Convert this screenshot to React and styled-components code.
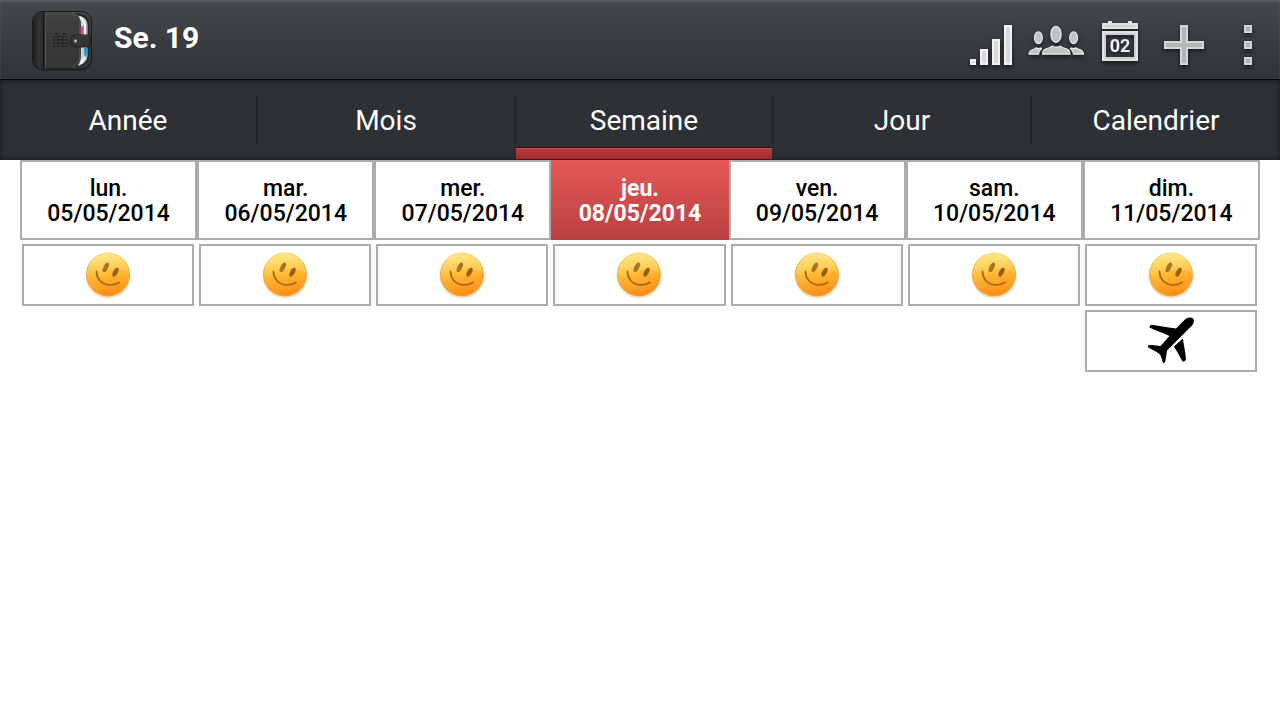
import { useState } from 'react';
import styled, { createGlobalStyle, css } from 'styled-components';

const GlobalStyle = createGlobalStyle`
  *,
  *::before,
  *::after {
    box-sizing: border-box;
  }
  body {
    margin: 0;
    background: #fff;
    font-family: Roboto, 'Liberation Sans', sans-serif;
  }
  button {
    margin: 0;
    padding: 0;
    border: 0;
    background: none;
    font: inherit;
    color: inherit;
    cursor: pointer;
  }
  svg {
    display: block;
  }
`;

const Header = styled.header`
  height: 80px;
  display: flex;
  align-items: center;
  padding-left: 32px;
  background: linear-gradient(#43484c, #303338);
  border-bottom: 1px solid #000;
  box-shadow: inset 0 2px 2px #5a6166;
  color: #fff;
`;

const Title = styled.h1`
  flex: 1;
  margin: 0 0 4px 18px;
  font-size: 30px;
  line-height: 36px;
  font-weight: 700;
`;

const Actions = styled.div`
  display: flex;
`;

const ActionButton = styled.button`
  width: 64px;
  height: 80px;
  svg {
    filter: drop-shadow(0 2px 2px rgba(0, 0, 0, 0.6));
  }
`;

const Tabs = styled.nav`
  height: 80px;
  display: flex;
  gap: 2px;
  background: #2d3035;
  box-shadow: inset 0 0 5px 1px #1b1d21;
`;

const Tab = styled.button`
  position: relative;
  flex: 0 0 20%;
  padding-top: 2px;
  font-size: 28px;
  line-height: 34px;
  color: #fff;

  &:last-child {
    flex: 1 1 0;
    min-width: 0;
  }

  &:not(:last-child)::before {
    content: '';
    position: absolute;
    left: 100%;
    top: 16px;
    bottom: 16px;
    width: 2px;
    background: #23262a;
  }

  ${({ $active }) =>
    $active &&
    css`
      &::after {
        content: '';
        position: absolute;
        left: 0;
        right: 0;
        bottom: 0;
        height: 13px;
        border-top: 1px solid #2c0808;
        border-bottom: 1px solid #5c0d0f;
        background: linear-gradient(#b93b3b, #a12e2e);
        box-shadow: inset 0 1px 0 #c95151;
      }
    `}
`;

const Main = styled.main`
  padding: 0 20px;
`;

const Week = styled.table`
  width: 100%;
  table-layout: fixed;
  border-collapse: separate;
  border-spacing: 0;
`;

const DayHead = styled.th`
  height: 80px;
  padding: 2px 0 0;
  border: 2px solid #acacac;
  font-size: 23px;
  line-height: 25px;
  font-weight: 500;
  color: #000;

  ${({ $today }) =>
    $today &&
    css`
      border-color: transparent;
      background: linear-gradient(#e75757, #b74141) border-box;
      font-weight: 700;
      color: #fff;
    `}
`;

const Slot = styled.td`
  padding: 4px 3px 0 2px;
`;

const EventButton = styled.button`
  width: 100%;
  height: 62px;
  display: flex;
  align-items: center;
  justify-content: center;
  border: 2px solid #acacac;
  background: #fff;
`;

const Logo = () => (
  <svg width="64" height="64" viewBox="0 -1 64 64" aria-hidden="true">
    <defs>
      <linearGradient id="leather" x1="0" y1="0" x2="0" y2="1">
        <stop offset="0" stopColor="#4a4a4a" />
        <stop offset="0.15" stopColor="#3e3e3e" />
        <stop offset="1" stopColor="#343434" />
      </linearGradient>
      <linearGradient id="spine" x1="0" y1="0" x2="1" y2="0">
        <stop offset="0" stopColor="#1c1c1c" />
        <stop offset="0.5" stopColor="#343434" />
        <stop offset="1" stopColor="#262626" />
      </linearGradient>
    </defs>
    <rect x="0" y="3" width="60" height="59" rx="11" fill="#111" opacity="0.4" />
    <rect x="0.5" y="2.5" width="59" height="57.5" rx="10" fill="url(#leather)" stroke="#191919" />
    <path d="M11 3H13V59.500H11A10 10 0 0 1 1 49V13A10 10 0 0 1 11 3Z" fill="url(#spine)" />
    <path d="M13.500 3V59.500" stroke="#565656" />
    <path d="M11.500 3V59.500" stroke="#151515" />
    <path d="M42 4C47 6 48 10 48 15V47C48 52 46 55 42 58C51 58 57 54 57 46V15C57 8 52 4 42 4Z" fill="#222" />
    <path d="M46 6.500C48.500 9 49 13 49 18V45C49 50 48 54 45.500 57C52 55 55.500 52 55.500 46V16C55.500 10 51 7.500 46 6.500Z" fill="#d5d5d5" />
    <path d="M52 10V53M54.500 13V51" stroke="#888" strokeWidth="0.6" />
    <path d="M48 8C51.500 11 53 15 53 19V44C53 49 51 52 48.500 55" fill="none" stroke="#fff" strokeWidth="1.600" />
    <path d="M48.500 18L51.500 17V26H48.500Z" fill="#d94784" />
    <path d="M52 39H55.500V45L52.500 48.500Z" fill="#159bd0" />
    <path d="M40 4C47 6 48 11 48 16V46C48 53 45 56 40 58.500" fill="none" stroke="#666" strokeWidth="0.8" />
    <rect x="21.500" y="27" width="14" height="11" rx="1" fill="#262626" />
    <path d="M23 25H26M31 25H34" stroke="#262626" strokeWidth="2" />
    <g fill="#3f3f3f">
      <rect x="22.500" y="28" width="3" height="2" />
      <rect x="27" y="28" width="3" height="2" />
      <rect x="31.500" y="28" width="3" height="2" />
      <rect x="22.500" y="31.500" width="3" height="2" />
      <rect x="27" y="31.500" width="3" height="2" />
      <rect x="31.500" y="31.500" width="3" height="2" />
      <rect x="22.500" y="35" width="3" height="2" />
      <rect x="27" y="35" width="3" height="2" />
      <rect x="31.500" y="35" width="3" height="2" />
    </g>
    <path d="M44 26H58V38H44A6 6 0 0 1 44 26Z" fill="#333" stroke="#1b1b1b" />
    <path d="M44 27H58" stroke="#484848" />
    <circle cx="43.500" cy="32" r="1.700" fill="#999" />
    <circle cx="43.500" cy="31.500" r="0.800" fill="#ddd" />
  </svg>
);

const SignalIcon = () => (
  <svg width="64" height="80" viewBox="0 0 64 80">
    <g fill="#d9d9d9" stroke="#f2f2f2" strokeWidth="2">
      <rect x="11" y="60" width="4" height="4" />
      <rect x="21" y="50" width="6" height="14" />
      <rect x="33" y="40" width="6" height="24" />
      <rect x="45" y="26" width="6" height="38" />
    </g>
  </svg>
);

const PeopleIcon = () => (
  <svg width="64" height="80" viewBox="0 0 64 80">
    <g fill="#c2c2c2" stroke="#e8e8e8" strokeWidth="1.300" strokeLinejoin="round">
      <ellipse cx="14.400" cy="37.800" rx="3.900" ry="5.900" />
      <ellipse cx="49.600" cy="37.800" rx="3.900" ry="5.900" />
      <path d="M5 54.200C5 51 7 50 10.500 49L12 47.800C14 49 15 48.800 16.500 48L17.500 48.500C15.500 50.500 14.500 51 14.500 54.200Z" />
      <path d="M59.500 54.200C59.500 51 57.500 50 53.500 49L52 47.800C50 49 49 48.800 47.500 48L46.500 48.500C48.500 50.500 49.500 51 49.500 54.200Z" />
      <ellipse cx="32" cy="34.300" rx="5.100" ry="8" />
      <path d="M18.500 54.200C18.500 50 21 49 26 47.500L28.500 46.200C31 47.600 33.500 47.600 36 46.200L38.500 47.500C43.500 49 46 50 46 54.200Z" />
    </g>
  </svg>
);

const DateIcon = () => (
  <svg width="64" height="80" viewBox="0 0 64 80">
    <path d="M14 23H20V21H24V23H40V21H44V23H50V29H14Z" fill="#e2e2e2" />
    <path d="M17 26H47" stroke="#cfcfcf" strokeWidth="2" />
    <path d="M14 31H50V61H14ZM18 35V57H46V35Z" fill="#e2e2e2" fillRule="evenodd" />
    <path d="M17 34H47V58H17Z" fill="none" stroke="#cfcfcf" strokeWidth="2" />
    <text x="32" y="52" textAnchor="middle" fontSize="18" fontWeight="700" fill="#f0f0f0">
      02
    </text>
  </svg>
);

const PlusIcon = () => (
  <svg width="64" height="80" viewBox="0 0 64 80">
    <path
      d="M29 26H35V42H51V48H35V64H29V48H13V42H29Z"
      fill="#b5b5b5"
      stroke="#d6d6d6"
      strokeWidth="2"
    />
  </svg>
);

const MoreIcon = () => (
  <svg width="64" height="80" viewBox="0 0 64 80">
    <g fill="#b0b0b0" stroke="#d2d2d2" strokeWidth="2">
      <rect x="29" y="26" width="6" height="6" />
      <rect x="29" y="42" width="6" height="6" />
      <rect x="29" y="58" width="6" height="6" />
    </g>
  </svg>
);

const SmileyIcon = () => (
  <svg width="48" height="48" viewBox="0 0 48 48">
    <defs>
      <linearGradient id="face" x1="0.4" y1="0" x2="0.6" y2="1">
        <stop offset="0" stopColor="#ffd95f" />
        <stop offset="0.450" stopColor="#ffbc3a" />
        <stop offset="1" stopColor="#ff8a12" />
      </linearGradient>
      <linearGradient id="gloss" x1="0" y1="0" x2="0" y2="1">
        <stop offset="0" stopColor="#fff3a8" stopOpacity="0.6" />
        <stop offset="1" stopColor="#ffe07a" stopOpacity="0.15" />
      </linearGradient>
    </defs>
    <circle cx="24" cy="25" r="22.500" fill="#d9a050" opacity="0.3" />
    <circle cx="24" cy="23.500" r="21.500" fill="url(#face)" stroke="#e8a035" strokeWidth="0.8" />
    <path d="M3 23A21 21 0 0 1 45 22C36 16 23 18 15 22C10 24.500 6 26 3 23Z" fill="url(#gloss)" />
    <ellipse cx="21.800" cy="16.300" rx="2.300" ry="5.200" transform="rotate(28 21.800 16.300)" fill="#a8741f" />
    <ellipse cx="31.500" cy="21.200" rx="2.300" ry="4.900" transform="rotate(28 31.500 21.200)" fill="#94600f" />
    <path
      d="M12.500 20.500C12.500 27 17 33 24 33.800C28 34.200 32 33.200 35 31.500"
      fill="none"
      stroke="#a86a14"
      strokeWidth="1.800"
      strokeLinecap="round"
    />
  </svg>
);

const PlaneIcon = () => (
  <svg width="48" height="48" viewBox="0 0 48 48">
    <path d="M38 2.500C41 0 44.500 0 46 1.500C47.500 3.500 47 6 45 8.500L20 33.500C19.500 37 19 41 18 45.500L16 46.200C15 43 14.500 40 13 37.500C10 34.500 5 32.500 0.800 30.200L1.500 28C5.500 28 10 28.500 13.500 29L22.500 19C16 16 9 13.500 2.500 10.500C2.500 9 3.500 8 5 7.800C13 9 21 10.500 29 11.500Z" />
    <path d="M35.800 21.500C37 29 38.500 36 39 42C38.500 44 37.500 44.500 35.500 44.500C33 39.500 30 34.500 27 29.500Z" />
  </svg>
);

const views = ['Année', 'Mois', 'Semaine', 'Jour', 'Calendrier'];

const actions = [
  { label: 'Statistiques', Icon: SignalIcon },
  { label: 'Contacts', Icon: PeopleIcon },
  { label: "Aujourd'hui", Icon: DateIcon },
  { label: 'Ajouter', Icon: PlusIcon },
  { label: 'Menu', Icon: MoreIcon },
];

const days = [
  { name: 'lun.', date: '05/05/2014', events: ['smiley'] },
  { name: 'mar.', date: '06/05/2014', events: ['smiley'] },
  { name: 'mer.', date: '07/05/2014', events: ['smiley'] },
  { name: 'jeu.', date: '08/05/2014', events: ['smiley'], today: true },
  { name: 'ven.', date: '09/05/2014', events: ['smiley'] },
  { name: 'sam.', date: '10/05/2014', events: ['smiley'] },
  { name: 'dim.', date: '11/05/2014', events: ['smiley', 'plane'] },
];

const eventTypes = {
  smiley: { label: 'Humeur', Icon: SmileyIcon },
  plane: { label: 'Voyage', Icon: PlaneIcon },
};

const App = () => {
  const [view, setView] = useState('Semaine');
  const rowCount = Math.max(...days.map((day) => day.events.length));

  return (
    <>
      <GlobalStyle />
      <Header>
        <Logo />
        <Title>Se. 19</Title>
        <Actions>
          {actions.map(({ label, Icon }) => (
            <ActionButton key={label} type="button" aria-label={label}>
              <Icon />
            </ActionButton>
          ))}
        </Actions>
      </Header>
      <Tabs>
        {views.map((name) => (
          <Tab
            key={name}
            type="button"
            $active={name === view}
            aria-current={name === view ? 'page' : undefined}
            onClick={() => setView(name)}
          >
            {name}
          </Tab>
        ))}
      </Tabs>
      <Main>
        <Week>
          <thead>
            <tr>
              {days.map((day) => (
                <DayHead key={day.date} scope="col" $today={day.today}>
                  {day.name}
                  <br />
                  {day.date}
                </DayHead>
              ))}
            </tr>
          </thead>
          <tbody>
            {Array.from({ length: rowCount }, (_, row) => (
              <tr key={row}>
                {days.map((day) => {
                  const event = eventTypes[day.events[row]];
                  return (
                    <Slot key={day.date}>
                      {event && (
                        <EventButton type="button" aria-label={`${event.label} ${day.date}`}>
                          <event.Icon />
                        </EventButton>
                      )}
                    </Slot>
                  );
                })}
              </tr>
            ))}
          </tbody>
        </Week>
      </Main>
    </>
  );
};

export default App;
